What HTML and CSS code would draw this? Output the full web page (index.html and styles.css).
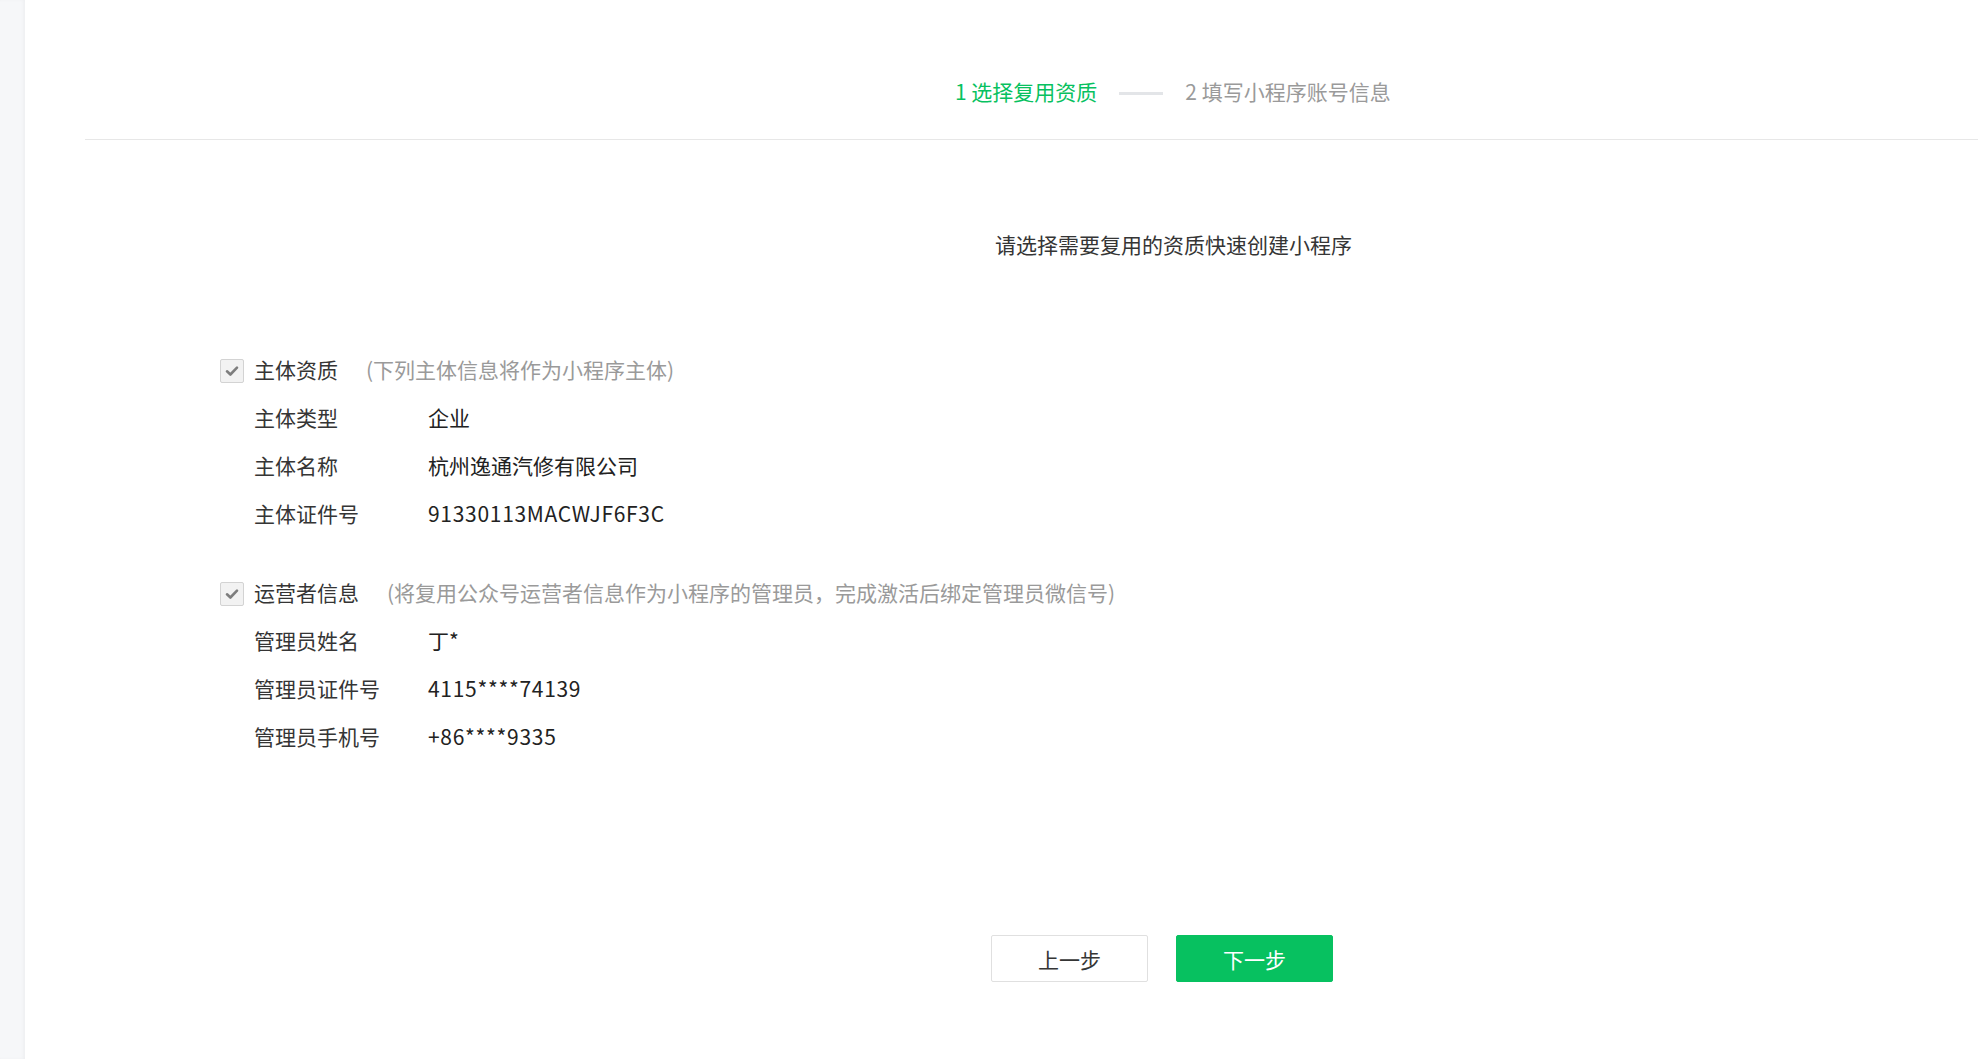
FILE: index.html
```html
<!DOCTYPE html>
<html lang="zh-CN">
<head>
    <meta charset="UTF-8">
    <meta name="viewport" content="width=device-width, initial-scale=1.0">
    <title>复用资质创建小程序</title>
    <link rel="stylesheet" href="styles.css">
</head>
<body>
    <div class="layout">
        <!-- faixa lateral -->
        <div class="lateral"></div>

        <div class="conteudo">
            <!-- passos -->
            <div class="passos">
                <span class="passo ativo">1 选择复用资质</span>
                <span class="traco"></span>
                <span class="passo">2 填写小程序账号信息</span>
            </div>

            <p class="titulo">请选择需要复用的资质快速创建小程序</p>

            <div class="formulario">
                <div class="linha cabecalho">
                    <span class="caixa">
                        <svg width="16" height="16" viewBox="0 0 16 16"><path d="M3 8.3 L6.4 11.5 L13 4.6" fill="none" stroke="#7d7d7d" stroke-width="2.6" stroke-linecap="round" stroke-linejoin="round"/></svg>
                    </span>
                    <span class="rotulo-grupo">主体资质</span>
                    <span class="dica">(下列主体信息将作为小程序主体)</span>
                </div>
                <div class="linha"><span class="rotulo">主体类型</span><span class="valor">企业</span></div>
                <div class="linha"><span class="rotulo">主体名称</span><span class="valor">杭州逸通汽修有限公司</span></div>
                <div class="linha"><span class="rotulo">主体证件号</span><span class="valor num">91330113MACWJF6F3C</span></div>

                <div class="linha cabecalho segundo">
                    <span class="caixa">
                        <svg width="16" height="16" viewBox="0 0 16 16"><path d="M3 8.3 L6.4 11.5 L13 4.6" fill="none" stroke="#7d7d7d" stroke-width="2.6" stroke-linecap="round" stroke-linejoin="round"/></svg>
                    </span>
                    <span class="rotulo-grupo">运营者信息</span>
                    <span class="dica">(将复用公众号运营者信息作为小程序的管理员，完成激活后绑定管理员微信号)</span>
                </div>
                <div class="linha"><span class="rotulo">管理员姓名</span><span class="valor">丁*</span></div>
                <div class="linha"><span class="rotulo">管理员证件号</span><span class="valor num">4115****74139</span></div>
                <div class="linha"><span class="rotulo">管理员手机号</span><span class="valor num">+86****9335</span></div>
            </div>

            <!-- botões -->
            <div class="acoes">
                <button class="botao">上一步</button>
                <button class="botao primario">下一步</button>
            </div>
        </div>
    </div>
</body>
</html>
```

FILE: styles.css
```css
*{
    margin: 0;
    padding: 0;
    box-sizing: border-box;
}
body{
    font-family: "Noto Sans CJK SC", "Noto Sans", sans-serif;
    font-size: 21px;
    color: #353535;
    background-color: #fff;
}
.layout{
    display: flex;
    min-height: 100vh;
}
/* faixa cinza da esquerda */
.lateral{
    width: 25px;
    background-color: #f6f7f9;
    box-shadow: inset -2px 0 3px rgba(0, 0, 0, 0.03);
}
.conteudo{
    flex: 1;
    padding-left: 60px;
}
.passos{
    display: flex;
    align-items: flex-start;
    height: 140px;
    padding-top: 76px;
    padding-left: 870px;
    border-bottom: 1px solid #e7e7e7;
    line-height: 30px;
}
.passo{
    color: #9a9a9a;
}
.passo.ativo{
    color: #07c160;
}
.traco{
    width: 44px;
    height: 3px;
    background-color: #e3e5e8;
    margin: 16px 22px 0 22px;
}
.titulo{
    margin-top: 89px;
    padding-left: 910px;
    line-height: 30px;
    color: #353535;
}
.formulario{
    margin-top: 86px;
    padding-left: 135px;
}
.linha{
    display: flex;
    align-items: center;
    height: 48px;
    padding-left: 34px;
}
.linha.cabecalho{
    padding-left: 0;
}
.linha.segundo{
    margin-top: 31px;
}
.caixa{
    width: 24px;
    height: 24px;
    border: 1px solid #d3d3d3;
    background-color: #f2f2f2;
    border-radius: 2px;
    display: flex;
    align-items: center;
    justify-content: center;
    margin-right: 10px;
    margin-top: 4px;
}
.rotulo-grupo{
    color: #353535;
}
.dica{
    color: #9a9a9a;
    margin-left: 28px;
}
.rotulo{
    width: 174px;
    color: #353535;
}
.valor{
    color: #222;
}
/* números um pouco mais largos */
.valor.num{
    letter-spacing: 0.7px;
}
.acoes{
    display: flex;
    gap: 28px;
    margin-top: 175px;
    padding-left: 906px;
}
.botao{
    width: 157px;
    height: 47px;
    font-family: inherit;
    font-size: 21px;
    color: #353535;
    background-color: #fff;
    border: 1px solid #e0e0e0;
    border-radius: 2px;
    cursor: pointer;
}
.botao.primario{
    background-color: #07c160;
    border-color: #07c160;
    color: #fff;
}
```
